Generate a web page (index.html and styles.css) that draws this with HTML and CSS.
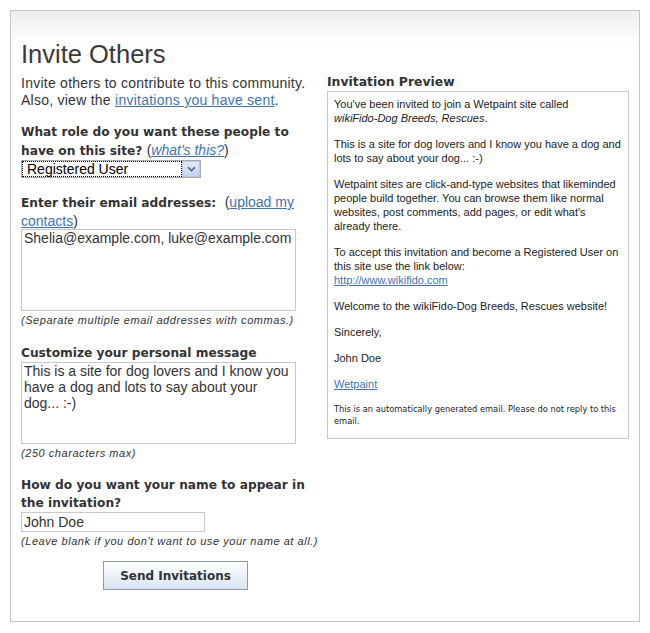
FILE: index.html
```html
<!DOCTYPE html>
<html>
<head>
<meta charset="utf-8">
<link rel="stylesheet" href="styles.css">
</head>
<body>
<div class="panel">
  <h1 class="title">Invite Others</h1>
  <div class="cols">
    <div class="left">
      <p class="intro">Invite others to contribute to this community. Also, view the <a href="#">invitations you have sent</a>.</p>

      <div class="field field-role">
        <div class="label">What role do you want these people to have on this site? <span class="aside">(<a href="#"><i>what's this?</i></a>)</span></div>
        <div class="select">
          <span class="select-text">Registered User</span>
          <span class="select-btn"><svg width="9" height="6" viewBox="0 0 9 6"><path d="M1 1.2 L4.5 4.6 L8 1.2" fill="none" stroke="#4d6185" stroke-width="1.6"/></svg></span>
        </div>
      </div>

      <div class="field field-email">
        <div class="label">Enter their email addresses:&nbsp; <span class="aside">(<a href="#">upload my contacts</a>)</span></div>
        <div class="textarea">Shelia@example.com, luke@example.com</div>
        <div class="hint">(Separate multiple email addresses with commas.)</div>
      </div>

      <div class="field field-msg">
        <div class="label">Customize your personal message</div>
        <div class="textarea">This is a site for dog lovers and I know you have a dog and lots to say about your dog... :-)</div>
        <div class="hint">(250 characters max)</div>
      </div>

      <div class="field field-name">
        <div class="label">How do you want your name to appear in the invitation?</div>
        <div class="input">John Doe</div>
        <div class="hint">(Leave blank if you don't want to use your name at all.)</div>
      </div>

      <div class="actions">
        <button class="btn">Send Invitations</button>
      </div>
    </div>

    <div class="right">
      <div class="preview-title">Invitation Preview</div>
      <div class="preview">
        <p>You've been invited to join a Wetpaint site called <i><span class="nowrap">wikiFido-Dog</span> Breeds, Rescues</i>.</p>
        <p>This is a site for dog lovers and I know you have a dog and lots to say about your dog... :-)</p>
        <p>Wetpaint sites are click-and-type websites that likeminded people build together. You can browse them like normal websites, post comments, add pages, or edit what's already there.</p>
        <p>To accept this invitation and become a Registered User on this site use the link below:<br><a href="#">http://www.wikifido.com</a></p>
        <p>Welcome to the wikiFido-Dog Breeds, Rescues website!</p>
        <p>Sincerely,</p>
        <p>John Doe</p>
        <p><a href="#">Wetpaint</a></p>
        <p class="auto">This is an automatically generated email. Please do not reply to this email.</p>
      </div>
    </div>
  </div>
</div>
</body>
</html>
```

FILE: styles.css
```css
html, body {
  margin: 0;
  padding: 0;
  background: #fff;
}
body {
  padding: 10px 10px 11px 10px;
  font-family: "Liberation Sans", Arial, sans-serif;
  color: #333;
}
.panel {
  border: 1px solid #c8c8c8;
  background: linear-gradient(#eeeeee 0px, #ffffff 34px);
  padding: 27px 10px 27px 10px;
  height: 556px;
}
.title {
  margin: 0;
  font-family: "Liberation Sans", Arial, sans-serif;
  font-weight: normal;
  font-size: 25.5px;
  line-height: 32px;
  color: #3a3a3a;
}
.cols {
  display: flex;
  gap: 16px;
  margin-top: 5px;
}
.left {
  width: 290px;
}
.right {
  width: 302px;
  margin-top: -2px;
}
a {
  color: #3f73ad;
  text-decoration: underline;
}
.nowrap {
  white-space: nowrap;
}
.intro {
  margin: 0 0 14px 0;
  font-size: 14px;
  letter-spacing: 0.25px;
  line-height: 17px;
}
.field {
  margin-bottom: 16px;
}
.field-role {
  margin-bottom: 15px;
}
.field-email {
  margin-bottom: 17px;
}
.field-email .textarea {
  margin-top: -2px;
}
.field-name {
  margin-top: 2px;
}
.label {
  font-family: "DejaVu Sans", Verdana, sans-serif;
  font-weight: bold;
  font-size: 12.2px;
  line-height: 18px;
  color: #333;
}
.aside {
  font-family: "Liberation Sans", Arial, sans-serif;
  font-weight: normal;
  font-size: 14px;
}
.select {
  display: flex;
  width: 178px;
  height: 16px;
  border: 1px solid #aaa;
  margin-top: 0;
  background: #fff;
}
.select-text {
  flex: 1;
  font-size: 14px;
  line-height: 14px;
  padding-left: 4px;
  outline: 1px dotted #000;
  outline-offset: -1px;
  border: 1px solid transparent;
  color: #000;
}
.select-btn {
  width: 16px;
  display: flex;
  align-items: center;
  justify-content: center;
  background: linear-gradient(#e3ebfa, #c3d3f2);
  border: 1px solid #b8c8ea;
}
.textarea {
  width: 269px;
  height: 80px;
  border: 1px solid #c8c8c8;
  padding: 0 2px;
  font-size: 14px;
  line-height: 16px;
  margin-top: 0;
}
.input {
  width: 178px;
  height: 18px;
  border: 1px solid #c8c8c8;
  padding: 0 2px;
  font-size: 14px;
  line-height: 18px;
  margin-top: 0;
}
.hint {
  font-size: 11px;
  font-style: italic;
  letter-spacing: 0.55px;
  line-height: 14px;
  margin-top: 2px;
  white-space: nowrap;
}
.actions {
  padding-left: 82px;
  margin-top: -3px;
}
.btn {
  width: 145px;
  height: 29px;
  border: 1px solid #8f9aa8;
  background: linear-gradient(#ffffff, #d9e3f3);
  font-family: "DejaVu Sans", Verdana, sans-serif;
  font-weight: bold;
  font-size: 12px;
  color: #333;
  padding: 0;
}
.preview-title {
  font-family: "DejaVu Sans", Verdana, sans-serif;
  font-weight: bold;
  font-size: 12.4px;
  line-height: 18px;
}
.preview {
  border: 1px solid #c8c8c8;
  height: 335px;
  padding: 5px 6px 6px 6px;
  font-size: 11px;
  line-height: 14px;
  color: #222;
}
.preview p {
  margin: 0 0 12px 0;
}
.preview .auto {
  font-family: "DejaVu Sans Condensed", "DejaVu Sans", sans-serif;
  font-stretch: condensed;
  font-size: 9.2px;
  line-height: 12px;
}
```
